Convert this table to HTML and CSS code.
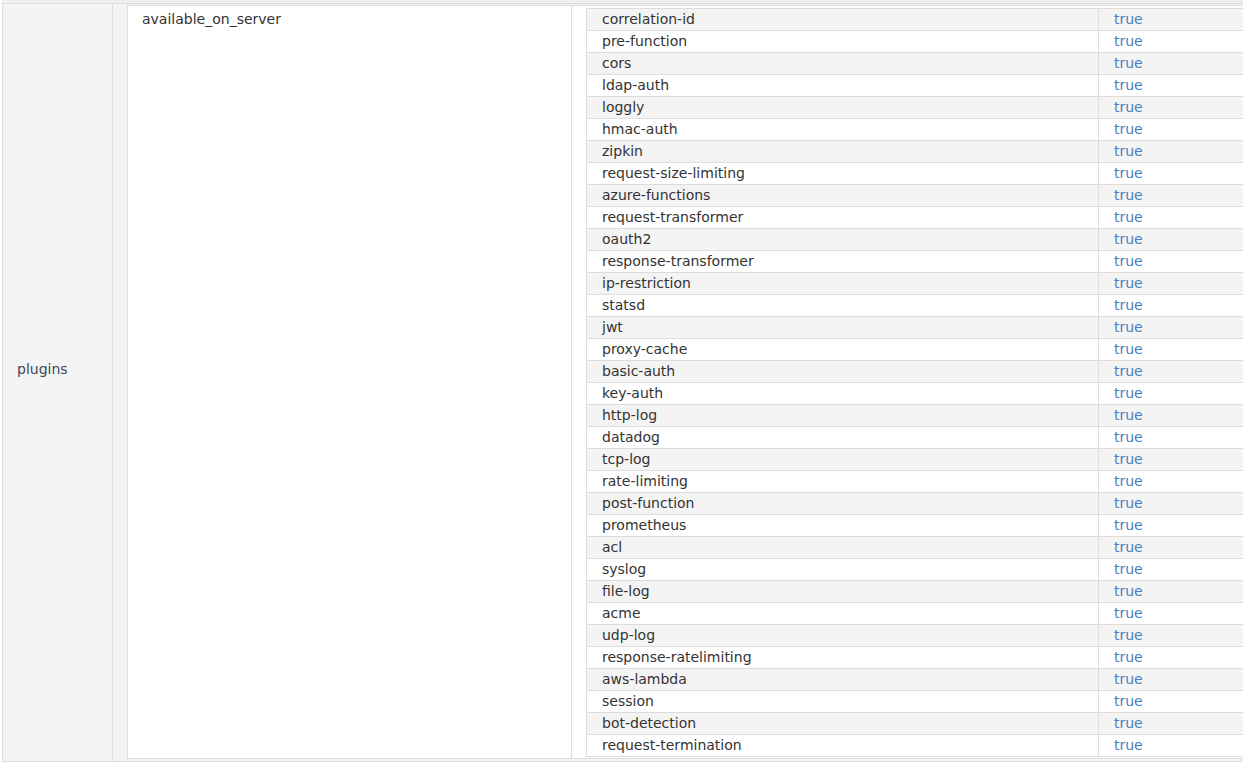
FILE: index.html
```html
<!DOCTYPE html>
<html>
<head>
<meta charset="utf-8">
<link rel="stylesheet" href="styles.css">
</head>
<body>
<div class="topband"></div>
<table class="outer">
  <tr>
    <td class="okey">plugins</td>
    <td class="oval">
      <table class="box">
        <tr>
          <td class="bkey">available_on_server</td>
          <td class="bval">
            <table class="list">
              <tr><td class="n">correlation-id</td><td class="v">true</td></tr>
              <tr><td class="n">pre-function</td><td class="v">true</td></tr>
              <tr><td class="n">cors</td><td class="v">true</td></tr>
              <tr><td class="n">ldap-auth</td><td class="v">true</td></tr>
              <tr><td class="n">loggly</td><td class="v">true</td></tr>
              <tr><td class="n">hmac-auth</td><td class="v">true</td></tr>
              <tr><td class="n">zipkin</td><td class="v">true</td></tr>
              <tr><td class="n">request-size-limiting</td><td class="v">true</td></tr>
              <tr><td class="n">azure-functions</td><td class="v">true</td></tr>
              <tr><td class="n">request-transformer</td><td class="v">true</td></tr>
              <tr><td class="n">oauth2</td><td class="v">true</td></tr>
              <tr><td class="n">response-transformer</td><td class="v">true</td></tr>
              <tr><td class="n">ip-restriction</td><td class="v">true</td></tr>
              <tr><td class="n">statsd</td><td class="v">true</td></tr>
              <tr><td class="n">jwt</td><td class="v">true</td></tr>
              <tr><td class="n">proxy-cache</td><td class="v">true</td></tr>
              <tr><td class="n">basic-auth</td><td class="v">true</td></tr>
              <tr><td class="n">key-auth</td><td class="v">true</td></tr>
              <tr><td class="n">http-log</td><td class="v">true</td></tr>
              <tr><td class="n">datadog</td><td class="v">true</td></tr>
              <tr><td class="n">tcp-log</td><td class="v">true</td></tr>
              <tr><td class="n">rate-limiting</td><td class="v">true</td></tr>
              <tr><td class="n">post-function</td><td class="v">true</td></tr>
              <tr><td class="n">prometheus</td><td class="v">true</td></tr>
              <tr><td class="n">acl</td><td class="v">true</td></tr>
              <tr><td class="n">syslog</td><td class="v">true</td></tr>
              <tr><td class="n">file-log</td><td class="v">true</td></tr>
              <tr><td class="n">acme</td><td class="v">true</td></tr>
              <tr><td class="n">udp-log</td><td class="v">true</td></tr>
              <tr><td class="n">response-ratelimiting</td><td class="v">true</td></tr>
              <tr><td class="n">aws-lambda</td><td class="v">true</td></tr>
              <tr><td class="n">session</td><td class="v">true</td></tr>
              <tr><td class="n">bot-detection</td><td class="v">true</td></tr>
              <tr><td class="n">request-termination</td><td class="v">true</td></tr>
            </table>
          </td>
        </tr>
      </table>
    </td>
  </tr>
</table>
</body>
</html>
```
FILE: styles.css
```css
html, body {
  margin: 0;
  padding: 0;
  background: #ffffff;
  overflow: hidden;
}
body {
  width: 1243px;
  height: 763px;
  font-family: "DejaVu Sans", "Open Sans", sans-serif;
  font-size: 14px;
  color: #333333;
}
.topband {
  height: 3px;
  margin-left: 2px;
  width: 1300px;
  background: #efefef;
}
table {
  border-collapse: collapse;
  border-spacing: 0;
}
.outer {
  margin-left: 2px;
  width: 1300px;
  border: 1px solid #dddddd;
  table-layout: fixed;
}
.okey {
  width: 110px;
  padding: 0 0 28px 14px;
  background: #f4f4f4;
  border-right: 1px solid #dddddd;
  color: #3c4a55;
  vertical-align: middle;
  height: 757px;
  box-sizing: border-box;
}
.oval {
  padding: 1px 0 2px 14px;
  background: #f4f4f4;
  vertical-align: top;
}
.box {
  width: 100%;
  background: #ffffff;
  border: 1px solid #dddddd;
  table-layout: fixed;
}
.bkey {
  width: 444px;
  padding: 3px 0 0 14px;
  vertical-align: top;
  border-right: 1px solid #dddddd;
  line-height: 20px;
  box-sizing: border-box;
}
.bval {
  padding: 2px 0 1px 14px;
  vertical-align: top;
}
.list {
  width: 100%;
  border: 1px solid #dddddd;
  table-layout: fixed;
}
.list tr:nth-child(odd) {
  background: #f4f4f4;
}
.list td {
  height: 22px;
  padding: 0 0 0 15px;
  border-bottom: 1px solid #dddddd;
  line-height: 21px;
  box-sizing: border-box;
}
.list td.n {
  width: 512px;
  border-right: 1px solid #dddddd;
}
.list td.v {
  color: #4a80c2;
}
```
